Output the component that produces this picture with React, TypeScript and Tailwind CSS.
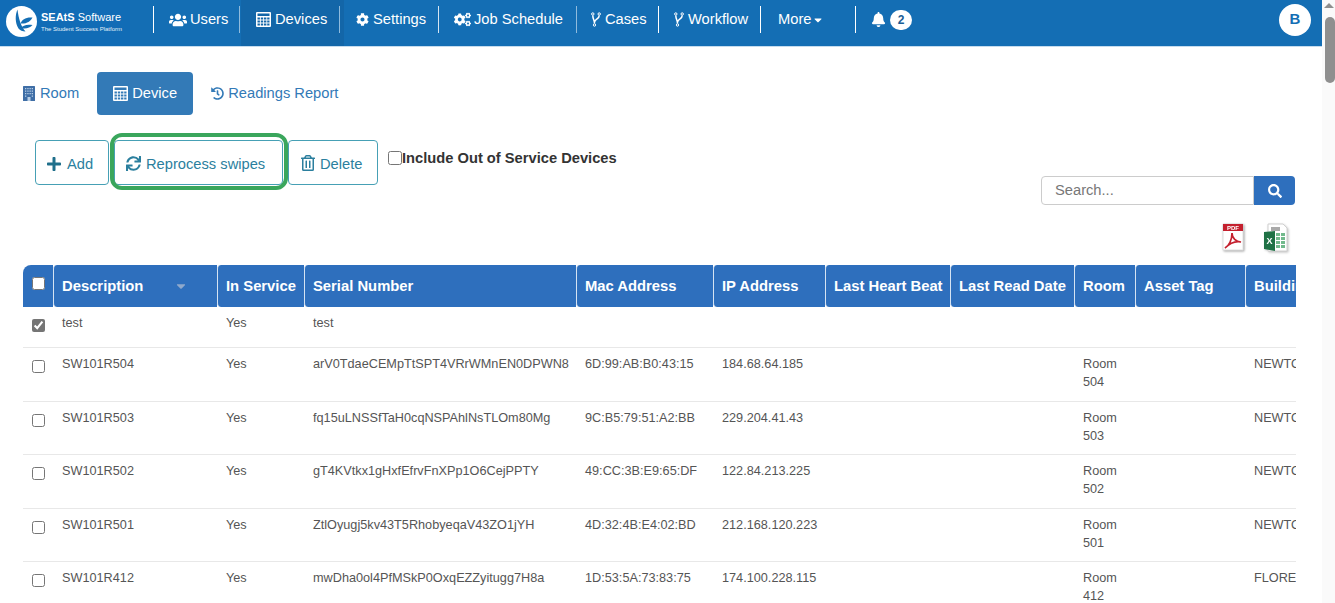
import React from "react";
import {
  FaUsers, FaCog, FaCogs, FaBell, FaHistory,
  FaPlus, FaSync, FaRegTrashAlt, FaSearch, FaCaretDown,
} from "react-icons/fa";

function Logo() {
  return (
    <svg width="31" height="31" viewBox="0 0 31 31" className="shrink-0">
      <circle cx="15.500" cy="15.500" r="15.500" fill="#fff" />
      <path d="M11.500 3.500C9 9 9 17 12.500 22.500c1.500 2 4 3 7 3C15 21 12.500 12 11.500 3.500z" fill="#146eb4" />
      <path d="M14.500 17.500c1.500-4 5-6.500 12-6-2 4-6 6.500-12 6z" fill="#146eb4" />
      <path d="M14.500 22c2.500-2.500 6-4 12-3-2.500 3-7 4.500-12 3z" fill="#146eb4" />
    </svg>
  );
}

function CalcIcon() {
  return (
    <svg width="15" height="15" viewBox="0 0 15 15" className="shrink-0">
      <path
        fillRule="evenodd"
        fill="currentColor"
        d="M1 0h13a1 1 0 0 1 1 1v13a1 1 0 0 1-1 1H1a1 1 0 0 1-1-1V1a1 1 0 0 1 1-1zM1.500 1.500v2.500h12V1.500zM1.500 5.500v2h2.400v-2zM4.800 5.500v2h2.400v-2zM8 5.500v2h2.400v-2zM11.200 5.500v2h2.300v-2zM1.500 8.500v2h2.400v-2zM4.800 8.500v2h2.400v-2zM8 8.500v2h2.400v-2zM11.200 8.500v2h2.300v-2zM1.500 11.500v2h2.400v-2zM4.800 11.500v2h2.400v-2zM8 11.500v2h2.400v-2zM11.200 11.500v2h2.300v-2z"
      />
    </svg>
  );
}

function BuildingIcon() {
  return (
    <svg width="12" height="15" viewBox="0 0 12 15" className="shrink-0">
      <rect x="0" y="0" width="12" height="15" rx="0.500" fill="#3f6ea6" />
      <path
        fill="#b9cfe6"
        d="M2 2h1.300v1.300H2zM4.300 2h1.300v1.300H4.300zM6.500 2h1.300v1.300H6.500zM8.700 2H10v1.300H8.700zM2 4.500h1.300v1.300H2zM4.300 4.500h1.300v1.300H4.300zM6.500 4.500h1.300v1.300H6.500zM8.700 4.500H10v1.300H8.700zM2 7h1.300v1.300H2zM4.300 7h1.300v1.300H4.300zM6.500 7h1.300v1.300H6.500zM8.700 7H10v1.300H8.700zM2 9.500h1.300v1.300H2zM8.700 9.500H10v1.300H8.700zM4.500 11h3v4h-3z"
      />
    </svg>
  );
}

function ForkIcon() {
  return (
    <svg width="10" height="15" viewBox="0 0 10 15" fill="none" stroke="currentColor" className="shrink-0">
      <circle cx="1.800" cy="2" r="1.200" strokeWidth="1" />
      <circle cx="8.200" cy="2" r="1.200" strokeWidth="1" />
      <circle cx="3.500" cy="13" r="1.200" strokeWidth="1" />
      <path d="M1.800 3.500C1.800 7 3.500 8 3.500 11.500M8.200 3.500C8.200 7 4.500 6.500 3.500 10" strokeWidth="1.500" />
    </svg>
  );
}

function PdfIcon() {
  return (
    <svg width="24" height="30" viewBox="0 0 24 30" className="drop-shadow-[1px_1px_1px_rgba(0,0,0,0.35)]">
      <path d="M2 1h20v26H2z" fill="#fff" stroke="#dedede" />
      <path d="M2 1h20v7H2z" fill="#c4202e" />
      <text x="12" y="7" textAnchor="middle" fontSize="6" fontWeight="700" fill="#fff" fontFamily="Liberation Sans">PDF</text>
      <path d="M4 25c4-2 7-8 7-15 0 5 4 9 9 9-5-1-11 1-16 6z" fill="none" stroke="#c4202e" strokeWidth="1.700" />
    </svg>
  );
}

function ExcelIcon() {
  return (
    <svg width="25" height="30" viewBox="0 0 25 30" className="drop-shadow-[1px_1px_1px_rgba(0,0,0,0.25)]">
      <path d="M5 1h15l4 4v23H5z" fill="#fff" stroke="#d0d0d0" />
      <path d="M8 4h9v4H8z" fill="#a9a9a9" />
      <path d="M13 10h4v3h-4zM18 10h4v3h-4zM13 14h4v3h-4zM18 14h4v3h-4zM13 18h4v3h-4zM18 18h4v3h-4zM13 22h4v3h-4zM18 22h4v3h-4z" fill="#72b98c" />
      <path d="M1 9l11-1v20l-11-2z" fill="#1f7145" />
      <text x="6.500" y="21" textAnchor="middle" fontSize="9" fontWeight="700" fill="#fff" fontFamily="Liberation Sans">X</text>
    </svg>
  );
}

const nav = [
  { label: "Users", icon: <FaUsers size={18} />, w: "w-[87px]", inner: "w-[86px]", pl: "pl-[15px]", gap: "gap-[3px]", sep: "border-[#8fbbdd]" },
  { label: "Devices", icon: <CalcIcon />, w: "w-[103px] bg-[#1366a8]", inner: "w-[99px]", pl: "pl-[15px]", gap: "gap-[4px]", sep: "border-[#8fbbdd]" },
  { label: "Settings", icon: <FaCog size={13} />, w: "w-[95px]", inner: "w-[95px]", pl: "pl-[12px]", gap: "gap-[4px]", sep: "border-[#d5e5f2]" },
  { label: "Job Schedule", icon: <FaCogs size={17} />, w: "w-[138px]", inner: "w-[138px]", pl: "pl-[15px]", gap: "gap-[3px]", sep: "border-[#8fbbdd]" },
  { label: "Cases", icon: <ForkIcon />, w: "w-[82px]", inner: "w-[82px]", pl: "pl-[14px]", gap: "gap-[4px]", sep: "border-white" },
  { label: "Workflow", icon: <ForkIcon />, w: "w-[102px]", inner: "w-[102px]", pl: "pl-[15px]", gap: "gap-[4px]", sep: "border-white" },
];

const cols = [30, 164, 87, 272, 137, 112, 125, 124, 61, 110, 150];

const rows = [
  { d: "SW101R504", s: "arV0TdaeCEMpTtSPT4VRrWMnEN0DPWN8", m: "6D:99:AB:B0:43:15", ip: "184.68.64.185", r: "Room 504", b: "NEWTON" },
  { d: "SW101R503", s: "fq15uLNSSfTaH0cqNSPAhlNsTLOm80Mg", m: "9C:B5:79:51:A2:BB", ip: "229.204.41.43", r: "Room 503", b: "NEWTON" },
  { d: "SW101R502", s: "gT4KVtkx1gHxfEfrvFnXPp1O6CejPPTY", m: "49:CC:3B:E9:65:DF", ip: "122.84.213.225", r: "Room 502", b: "NEWTON" },
  { d: "SW101R501", s: "ZtlOyugj5kv43T5RhobyeqaV43ZO1jYH", m: "4D:32:4B:E4:02:BD", ip: "212.168.120.223", r: "Room 501", b: "NEWTON" },
  { d: "SW101R412", s: "mwDha0ol4PfMSkP0OxqEZZyitugg7H8a", m: "1D:53:5A:73:83:75", ip: "174.100.228.115", r: "Room 412", b: "FLORENCE" },
];

const heads = ["Description", "In Service", "Serial Number", "Mac Address", "IP Address", "Last Heart Beat", "Last Read Date", "Room", "Asset Tag", "Building"];

function Td({ children }: { children?: React.ReactNode }) {
  return <td className="align-top border-b border-[#e8e8e8] pl-[9px] pr-[4px] pt-[7.400px] pb-0 text-[12.700px] leading-[18px] text-[#555]">{children}</td>;
}

function Row({ check, d, s, m, ip, r, b, h }: { check?: boolean; d: string; s: string; m?: string; ip?: string; r?: string; b?: string; h: string }) {
  return (
    <tr className={h}>
      <td className="align-top border-b border-[#e8e8e8] pl-[9px] pt-[12px]">
        <input type="checkbox" defaultChecked={check} className="block w-[13px] h-[13px] accent-[#757575]" />
      </td>
      <Td>{d}</Td>
      <Td>Yes</Td>
      <Td>{s}</Td>
      <Td>{m}</Td>
      <Td>{ip}</Td>
      <Td />
      <Td />
      <Td>{r}</Td>
      <Td />
      <Td>{b}</Td>
    </tr>
  );
}

export default function App() {
  return (
    <div className="flex h-[603px] w-[1335px] overflow-hidden bg-white font-['Liberation_Sans',Arial,sans-serif]">
      <div className="w-[1322px] shrink-0">
        <header className="flex h-[47px] items-stretch border-b border-[#c6dcee] bg-[#146eb4] text-[14.700px] text-white">
          <div className="flex w-[130px] shrink-0 items-center gap-[4px] bg-[#116cb6] pb-[3px] pl-[6px]">
            <Logo />
            <div className="flex flex-col leading-none">
              <span className="whitespace-nowrap text-[11px]"><b>SEAtS</b> Software</span>
              <span className="mt-[3px] whitespace-nowrap text-[6px] text-[#e3eff8]">The Student Success Platform</span>
            </div>
          </div>
          <div className="flex w-[24px] shrink-0 items-center pb-[7px]">
            <div className="h-[27px] w-full border-r border-white" />
          </div>
          {nav.map((n) => (
            <div key={n.label} className={`${n.w} flex shrink-0 items-center pb-[7px]`}>
              <div className={`${n.inner} ${n.pl} ${n.gap} ${n.sep} flex h-[27px] shrink-0 items-center border-r`}>
                {n.icon}
                <span>{n.label}</span>
              </div>
            </div>
          ))}
          <div className="flex w-[95px] shrink-0 items-center pb-[7px]">
            <div className="flex h-[27px] w-full items-center border-r border-white pl-[17px]">
              <span>More</span>
              <FaCaretDown size={12} className="ml-[1px]" />
            </div>
          </div>
          <div className="flex items-center pb-[7px] pl-[15px]">
            <FaBell size={15} />
            <span className="ml-[4px] flex h-[20px] w-[22px] items-center justify-center rounded-full bg-white text-[12px] font-bold text-[#1a5d96]">2</span>
          </div>
          <div className="flex flex-1 items-center justify-end pb-[7px] pr-[11px]">
            <span className="flex h-[32px] w-[32px] items-center justify-center rounded-full bg-white text-[15px] font-bold text-[#146eb4]">B</span>
          </div>
        </header>

        <nav className="mt-[25px] flex h-[43px] items-stretch text-[14.700px] text-[#337ab7]">
          <a className="ml-[23px] flex items-center gap-[5px]">
            <BuildingIcon />
            <span>Room</span>
          </a>
          <a className="ml-[18px] flex w-[96px] items-center gap-[4px] rounded-[4px] bg-[#337ab7] pl-[16px] text-white">
            <CalcIcon />
            <span>Device</span>
          </a>
          <a className="ml-[18px] flex items-center gap-[4px]">
            <FaHistory size={13} />
            <span>Readings Report</span>
          </a>
        </nav>

        <div className="mt-[25px] flex h-[45px] pl-[35px] text-[14.700px] text-[#2b7f9e]">
          <button className="flex w-[74px] items-center gap-[5px] rounded-[4px] border border-[#46a0b5] pl-[10px] pt-[3px]">
            <FaPlus size={16} className="-mt-[1px] text-[#1f6f8b]" />
            <span>Add</span>
          </button>
          <button className="relative ml-[5px] flex w-[169px] items-center gap-[5px] rounded-[4px] border border-[#46a0b5] pl-[11px] pt-[3px]">
            <FaSync size={15} className="-mt-[2px]" />
            <span>Reprocess swipes</span>
            <span className="absolute -top-[8px] -bottom-[6px] -left-[5px] -right-[6px] rounded-[12px] border-[4px] border-[#3aa65c]" />
          </button>
          <button className="ml-[5px] flex w-[90px] items-center gap-[4px] rounded-[4px] border border-[#46a0b5] pl-[11px] pt-[3px]">
            <FaRegTrashAlt size={16} className="-mt-[2px]" />
            <span>Delete</span>
          </button>
          <label className="ml-[10px] flex h-[36px] items-center text-[14.700px] font-bold text-[#333]">
            <input type="checkbox" className="block h-[14px] w-[14px]" />
            <span>Include Out of Service Devices</span>
          </label>
        </div>

        <div className="-mt-[9px] flex justify-end pr-[27px]">
          <div className="flex h-[29px] w-[254px]">
            <input
              placeholder="Search..."
              className="h-full w-[213px] rounded-l-[4px] border border-[#ccc] pb-[2px] pl-[13px] text-[14.700px] text-[#555] placeholder:text-[#777]"
            />
            <button className="flex h-full w-[41px] items-center justify-center rounded-r-[4px] bg-[#2e6fbd] text-white">
              <FaSearch size={14} />
            </button>
          </div>
        </div>

        <div className="mt-[18px] flex h-[30px] justify-end gap-[18px] pr-[34px]">
          <PdfIcon />
          <ExcelIcon />
        </div>

        <div className="ml-[23px] mt-[12px] w-[1273px] overflow-hidden">
          <table className="w-[1372px] table-fixed border-separate border-spacing-0">
            <colgroup>
              {cols.map((c, i) => (
                <col key={i} style={{ width: c }} />
              ))}
            </colgroup>
            <thead>
              <tr className="h-[42px]">
                <th className="rounded-tl-[8px] bg-[#2e6fbd] pb-[5px] pl-[9px] align-middle">
                  <input type="checkbox" className="block h-[13px] w-[13px]" />
                </th>
                {heads.map((h, i) => (
                  <th key={h} className="rounded-l-[4px] border-l border-[#d5e3f3] bg-[#2e6fbd] pl-[8px] text-left text-[14.800px] font-bold whitespace-nowrap text-white">
                    {i === 0 ? (
                      <div className="flex items-center justify-between pr-[29px]">
                        <span>{h}</span>
                        <FaCaretDown size={14} className="text-[#8fa9cc]" />
                      </div>
                    ) : (
                      h
                    )}
                  </th>
                ))}
              </tr>
            </thead>
            <tbody>
              <Row check d="test" s="test" h="h-[41px]" />
              {rows.map((r) => (
                <Row key={r.d} {...r} h="h-[53.500px]" />
              ))}
            </tbody>
          </table>
        </div>
      </div>

      <div className="flex w-[13px] shrink-0 flex-col items-end bg-[#fafafa]">
        <div className="mx-auto mt-[3px] h-0 w-0 border-x-[5px] border-b-[5px] border-x-transparent border-b-[#8f8f8f]" />
        <div className="mt-[9px] h-[66px] w-[10px] rounded-full bg-[#8f8f8f]" />
      </div>
    </div>
  );
}
